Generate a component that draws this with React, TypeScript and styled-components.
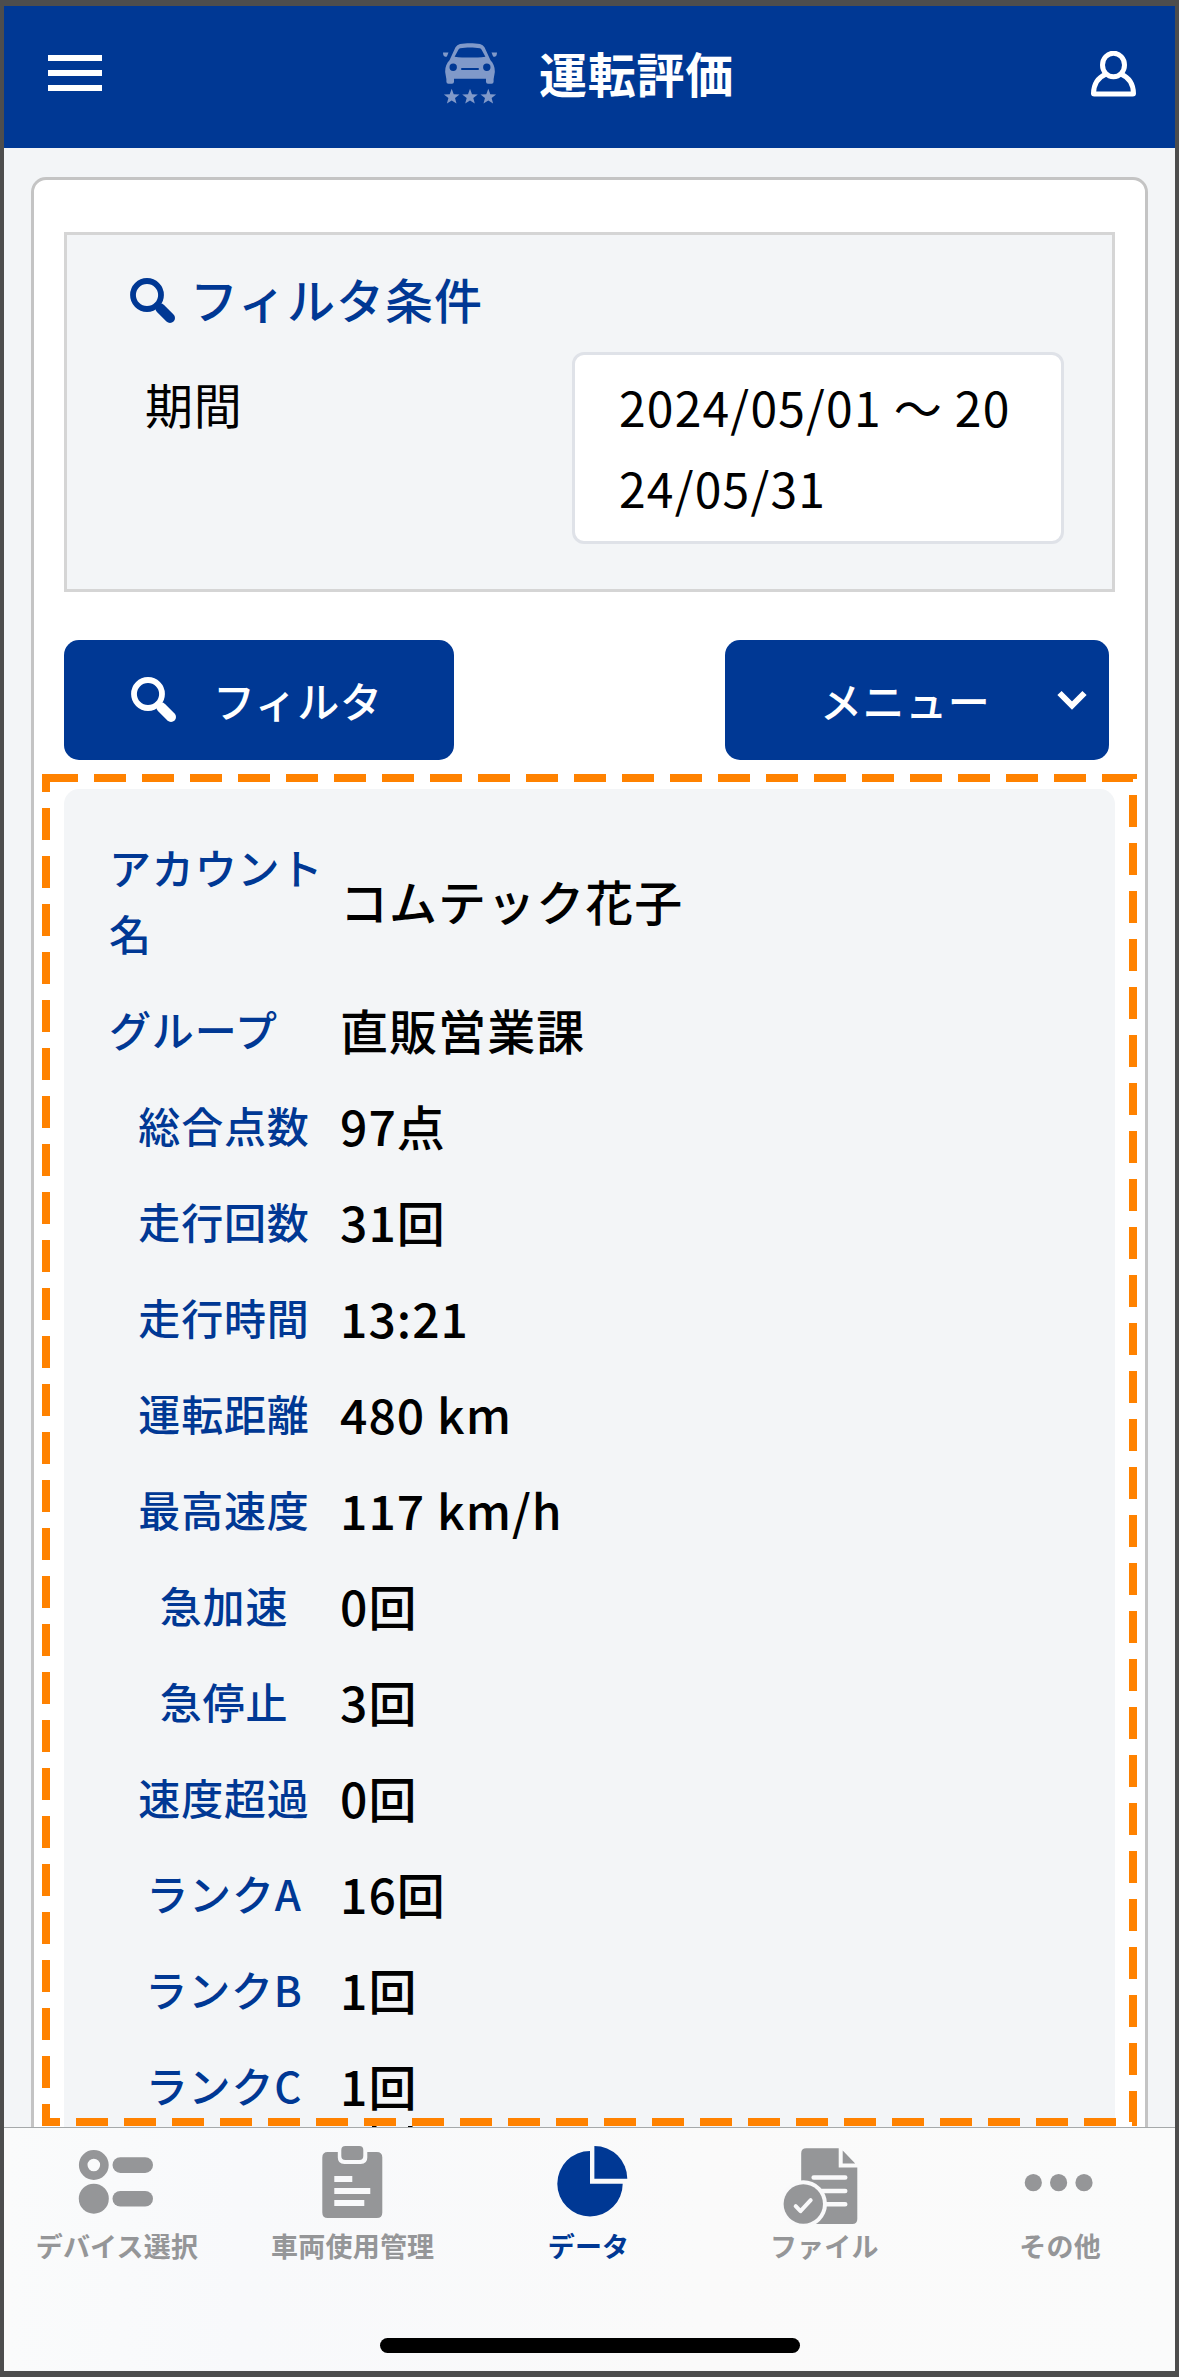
import React from "react";
import styled, { createGlobalStyle } from "styled-components";

const NAVY = "#003894";
const PANEL = "#f3f5f7";
const ORANGE = "#ff8200";
const MUTED = "#959698";

const GlobalStyle = createGlobalStyle`
  * { box-sizing: border-box; }
  body {
    margin: 0;
    font-family: "Noto Sans CJK JP", "Noto Sans", sans-serif;
    color: #000;
  }
`;

const Screen = styled.div`
  width: 1179px;
  height: 2377px;
  border: solid #4d4d4d;
  border-width: 6px 4px;
  display: flex;
  flex-direction: column;
  background: ${PANEL};
  letter-spacing: 0.75px;
  overflow: hidden;
`;

const Header = styled.header`
  flex: none;
  height: 142px;
  padding: 0 39px 0 44px;
  display: flex;
  align-items: center;
  background: ${NAVY};
`;

const MenuButton = styled.button`
  width: 54px;
  margin: 0 0 8px;
  padding: 0;
  border: 0;
  background: none;
  display: flex;
  flex-direction: column;
  gap: 9px;
`;

const MenuBar = styled.span`
  display: block;
  width: 100%;
  height: 6px;
  background: #fff;
`;

const TitleGroup = styled.div`
  margin: 0 0 7px 340px;
  display: flex;
  align-items: center;
  gap: 41px;
`;

const Title = styled.h1`
  margin: 0;
  padding-bottom: 3px;
  font-size: 48px;
  line-height: 60px;
  font-weight: 700;
  color: #fff;
`;

const UserButton = styled.button`
  margin: 0 0 7px auto;
  padding: 0;
  border: 0;
  background: none;
  display: flex;
`;

const Main = styled.main`
  flex: 1;
  min-height: 0;
  padding: 29px 27px 0;
  position: relative;
  overflow: hidden;
`;

const Card = styled.section`
  height: 2000px;
  padding: 52px 30px 0;
  border: 3px solid #c4c4c4;
  border-radius: 15px;
  background: #fff;
`;

const FilterBox = styled.div`
  height: 360px;
  padding: 30px 48px 0 63px;
  border: 3px solid #d5d5d5;
  background: ${PANEL};
`;

const FilterHeading = styled.h2`
  margin: 0;
  height: 72px;
  display: flex;
  align-items: center;
  gap: 14px;
  font-size: 48px;
  line-height: 60px;
  font-weight: 500;
  letter-spacing: 1px;
  color: ${NAVY};
`;

const HeadingText = styled.span`
  padding-bottom: 6px;
`;

const FilterRow = styled.div`
  margin-top: 15px;
  padding-left: 15px;
  display: flex;
  justify-content: space-between;
  align-items: flex-start;
`;

const FilterLabel = styled.div`
  padding-top: 15px;
  font-size: 48px;
  line-height: 72px;
`;

const DateRange = styled.div`
  width: 492px;
  height: 192px;
  padding: 11px 43px 11px 44px;
  border: 3px solid #dfe2e8;
  border-radius: 12px;
  background: #fff;
  font-size: 48px;
  line-height: 81px;
  letter-spacing: 1.2px;
  word-break: break-all;
`;

const Actions = styled.div`
  margin-top: 48px;
  padding-right: 6px;
  display: flex;
  justify-content: space-between;
`;

const ActionButton = styled.button<{ $width: number; $pad: string; $gap: number }>`
  width: ${(p) => p.$width}px;
  height: 120px;
  padding: ${(p) => p.$pad};
  border: 0;
  border-radius: 15px;
  display: flex;
  align-items: center;
  gap: ${(p) => p.$gap}px;
  background: ${NAVY};
  color: #fff;
  font-family: inherit;
  font-size: 42px;
  font-weight: 500;
  letter-spacing: 0.6px;
`;

const ActionText = styled.span`
  padding-bottom: 2px;
`;

const DataPanel = styled.dl`
  margin: 29px 0 0;
  padding: 30px 45px;
  border-radius: 15px;
  background: ${PANEL};
`;

const DataRow = styled.div`
  padding: 15px 0;
  display: grid;
  grid-template-columns: 230px 1fr;
  column-gap: 1px;
  align-items: center;
`;

const DataLabel = styled.dt<{ $centered: boolean }>`
  font-size: 42px;
  line-height: 66px;
  font-weight: 500;
  letter-spacing: 0.85px;
  color: ${NAVY};
  text-align: ${(p) => (p.$centered ? "center" : "left")};
`;

const DataValue = styled.dd`
  margin: 0;
  font-size: 48px;
  line-height: 66px;
  font-weight: 500;
  letter-spacing: 1.05px;
`;

const Highlight = styled.svg`
  position: absolute;
  left: 0;
  top: 0;
`;

const TabBar = styled.nav`
  flex: none;
  height: 244px;
  border-top: 1px solid #a5a9aa;
  background: linear-gradient(90deg, #fafbfb, #f8f9fb 20%, #fafafa 60%, #fafbfb);
  display: flex;
  flex-direction: column;
  align-items: center;
`;

const Tabs = styled.div`
  width: 1179px;
  margin: 0 -3px 0 -5px;
  height: 210px;
  display: grid;
  grid-template-columns: repeat(5, 1fr);
`;

const Tab = styled.div<{ $active?: boolean }>`
  padding-top: 13px;
  display: flex;
  flex-direction: column;
  align-items: center;
  color: ${(p) => (p.$active ? NAVY : MUTED)};
  font-size: 27px;
  line-height: 40px;
  font-weight: 700;
  letter-spacing: 0.2px;
`;

const TabIcon = styled.svg`
  display: block;
  width: 84px;
  height: 84px;
  margin-bottom: 1px;
`;

const HomeIndicator = styled.div`
  width: 420px;
  height: 15px;
  border-radius: 8px;
  background: #000;
`;

const CarIcon = () => (
  <svg width="56" height="62" viewBox="0 0.8 56 62" fill="#8099c9">
    <path
      fillRule="evenodd"
      d="M18 1.9C24 0.6 32 0.6 38 1.9Q41 2.6 42.5 5L48.5 18C51.5 21 53 25 52.8 30L51.6 37V39.6Q51.6 41.6 49.6 41.6H46Q44 41.6 44 39.6V36.6H12V39.6Q12 41.6 10 41.6H6.4Q4.4 41.6 4.4 39.6V37L3.2 30C3 25 4.5 21 7.5 18L13.5 5Q15 2.6 18 1.9ZM18.2 6Q17 6.4 16.4 7.5L12.6 14.5C22 15.7 34 15.7 43.4 14.5L39.6 7.5Q39 6.4 37.8 6C32 4.9 24 4.9 18.2 6ZM11.2 21.3A3.7 3.7 0 1 0 11.2 28.7A3.7 3.7 0 1 0 11.2 21.3ZM44.8 21.3A3.7 3.7 0 1 0 44.8 28.7A3.7 3.7 0 1 0 44.8 21.3ZM20 25.700Q19 25.700 19 26.800T20 27.900H36Q37 27.900 37 26.800T36 25.700Z"
    />
    <path d="M1 10.200H6.500L5 14Q4.400 14.700 3.200 14.500Q1 13.800 1 10.200ZM55 10.200H49.500L51 14Q51.600 14.700 52.800 14.500Q55 13.800 55 10.200Z" />
    {[9.7, 28, 46.3].map((x) => (
      <path
        key={x}
        transform={`translate(${x} 54.6)`}
        d="M0-8L2-2.6L7.8-2.4L3.3 1.2L4.8 6.8L0 3.6L-4.8 6.8L-3.3 1.2L-7.8-2.4L-2-2.6Z"
      />
    ))}
  </svg>
);

const UserIcon = () => (
  <svg width="45" height="46" viewBox="0 0 45 46" fill="none" stroke="#fff" strokeWidth="5">
    <ellipse cx="22.5" cy="14" rx="11" ry="11.8" />
    <path d="M14.8 23.2C7.5 26.2 2.7 33 2.5 42.5Q2.5 43 3.3 43H41.7Q42.5 43 42.5 42.5C42.3 33 37.5 26.2 30.2 23.2" />
  </svg>
);

const SearchIcon = ({ color }: { color: string }) => (
  <svg width="46" height="46" viewBox="0 0 46 46" fill="none" stroke={color}>
    <circle cx="17" cy="17" r="14" strokeWidth="5.8" />
    <path d="M27.5 27.5L30 30" strokeWidth="7" />
    <path d="M30.5 30.5L40 40" strokeWidth="10" strokeLinecap="round" />
  </svg>
);

const ChevronIcon = () => (
  <svg width="30" height="20" viewBox="0 0 30 20" fill="none" stroke="#fff" strokeWidth="6">
    <path d="M2.5 3L15 15.5L27.5 3" />
  </svg>
);

const DeviceIcon = () => (
  <TabIcon viewBox="75 2141 84 84" fill="currentColor">
    <circle cx="93.8" cy="2165" r="10.6" fill="none" stroke="currentColor" strokeWidth="8.6" />
    <circle cx="93.8" cy="2198.7" r="15" />
    <rect x="112.5" y="2157.3" width="40.5" height="15.6" rx="7.8" />
    <rect x="112.5" y="2191" width="40.5" height="15.6" rx="7.8" />
  </TabIcon>
);

const ClipboardIcon = () => (
  <TabIcon viewBox="310.7 2141 84 84" fill="currentColor">
    <path d="M327.5 2152H337.5V2157.5Q337.5 2164 344 2164H360.5Q367 2164 367 2157.5V2152H376.5Q382 2152 382 2157.5V2212.5Q382 2218 376.5 2218H327.5Q322 2218 322 2212.5V2157.5Q322 2152 327.5 2152Z" />
    <rect x="341" y="2146" width="22" height="14" rx="4" />
    <path fill="#f8f9fb" d="M334 2176H352V2182H334ZM334 2188H370V2194H334ZM334 2200H364V2206H334Z" />
  </TabIcon>
);

const PieIcon = () => (
  <TabIcon viewBox="546.5 2141 84 84" fill="currentColor">
    <path d="M590.5 2151A32.7 32.7 0 1 0 623.2 2183.7H590.5Z" />
    <path d="M594.9 2146A32.9 32.7 0 0 1 627.8 2178.7H594.9Z" />
  </TabIcon>
);

const FileIcon = () => (
  <TabIcon viewBox="782.3 2141 84 84" fill="currentColor">
    <path d="M806.5 2148.3H839V2167.5H857.6V2219Q857.6 2224 852.6 2224H806.5Q801.5 2224 801.5 2219V2153.3Q801.5 2148.3 806.5 2148.3ZM843 2150.5L855.5 2163.5H843Z" />
    <path
      d="M814 2177.5H845.5M814 2191H845.5M814 2204.3H845.5"
      stroke="#f9f9fa"
      strokeWidth="4.6"
      strokeLinecap="round"
    />
    <circle cx="803.6" cy="2204" r="23.7" fill="#f9f9fa" />
    <circle cx="803.6" cy="2204" r="19.7" />
    <path
      d="M796 2206.2L800.8 2211.2L811 2200.2"
      fill="none"
      stroke="#f9f9fa"
      strokeWidth="4"
      strokeLinecap="round"
      strokeLinejoin="round"
    />
  </TabIcon>
);

const MoreIcon = () => (
  <TabIcon viewBox="1018 2141 84 84" fill="currentColor">
    {[1033.3, 1058.6, 1084].map((x) => (
      <circle key={x} cx={x} cy="2182.7" r="8.6" />
    ))}
  </TabIcon>
);

const rows: { label: string; value: string; centered?: boolean }[] = [
  { label: "アカウント名", value: "コムテック花子" },
  { label: "グループ", value: "直販営業課" },
  { label: "総合点数", value: "97点", centered: true },
  { label: "走行回数", value: "31回", centered: true },
  { label: "走行時間", value: "13:21", centered: true },
  { label: "運転距離", value: "480 km", centered: true },
  { label: "最高速度", value: "117 km/h", centered: true },
  { label: "急加速", value: "0回", centered: true },
  { label: "急停止", value: "3回", centered: true },
  { label: "速度超過", value: "0回", centered: true },
  { label: "ランクA", value: "16回", centered: true },
  { label: "ランクB", value: "1回", centered: true },
  { label: "ランクC", value: "1回", centered: true },
];

const tabs = [
  { label: "デバイス選択", Icon: DeviceIcon },
  { label: "車両使用管理", Icon: ClipboardIcon },
  { label: "データ", Icon: PieIcon, active: true },
  { label: "ファイル", Icon: FileIcon },
  { label: "その他", Icon: MoreIcon },
];

export default function App() {
  return (
    <>
      <GlobalStyle />
      <Screen>
        <Header>
          <MenuButton>
            <MenuBar />
            <MenuBar />
            <MenuBar />
          </MenuButton>
          <TitleGroup>
            <CarIcon />
            <Title>運転評価</Title>
          </TitleGroup>
          <UserButton>
            <UserIcon />
          </UserButton>
        </Header>
        <Main>
          <Card>
            <FilterBox>
              <FilterHeading>
                <SearchIcon color={NAVY} />
                <HeadingText>フィルタ条件</HeadingText>
              </FilterHeading>
              <FilterRow>
                <FilterLabel>期間</FilterLabel>
                <DateRange>2024/05/01 ～ 2024/05/31</DateRange>
              </FilterRow>
            </FilterBox>
            <Actions>
              <ActionButton $width={390} $pad="0 0 0 67px" $gap={36}>
                <SearchIcon color="#fff" />
                <ActionText>フィルタ</ActionText>
              </ActionButton>
              <ActionButton $width={384} $pad="0 0 0 95px" $gap={67}>
                <ActionText>メニュー</ActionText>
                <ChevronIcon />
              </ActionButton>
            </Actions>
            <DataPanel>
              {rows.map((row) => (
                <DataRow key={row.label}>
                  <DataLabel $centered={!!row.centered}>{row.label}</DataLabel>
                  <DataValue>{row.value}</DataValue>
                </DataRow>
              ))}
            </DataPanel>
          </Card>
          <Highlight width="1171" height="1979" viewBox="4 148 1171 1979">
            <path
              d="M46 778H1133V2122H46Z"
              fill="none"
              stroke={ORANGE}
              strokeWidth="8"
              strokeDasharray="32 16"
            />
            <path d="M372 2126H376.5V2127H372ZM408 2126H412.5V2127H408Z" fill="#000" />
          </Highlight>
        </Main>
        <TabBar>
          <Tabs>
            {tabs.map(({ label, Icon, active }) => (
              <Tab key={label} $active={active}>
                <Icon />
                {label}
              </Tab>
            ))}
          </Tabs>
          <HomeIndicator />
        </TabBar>
      </Screen>
    </>
  );
}
